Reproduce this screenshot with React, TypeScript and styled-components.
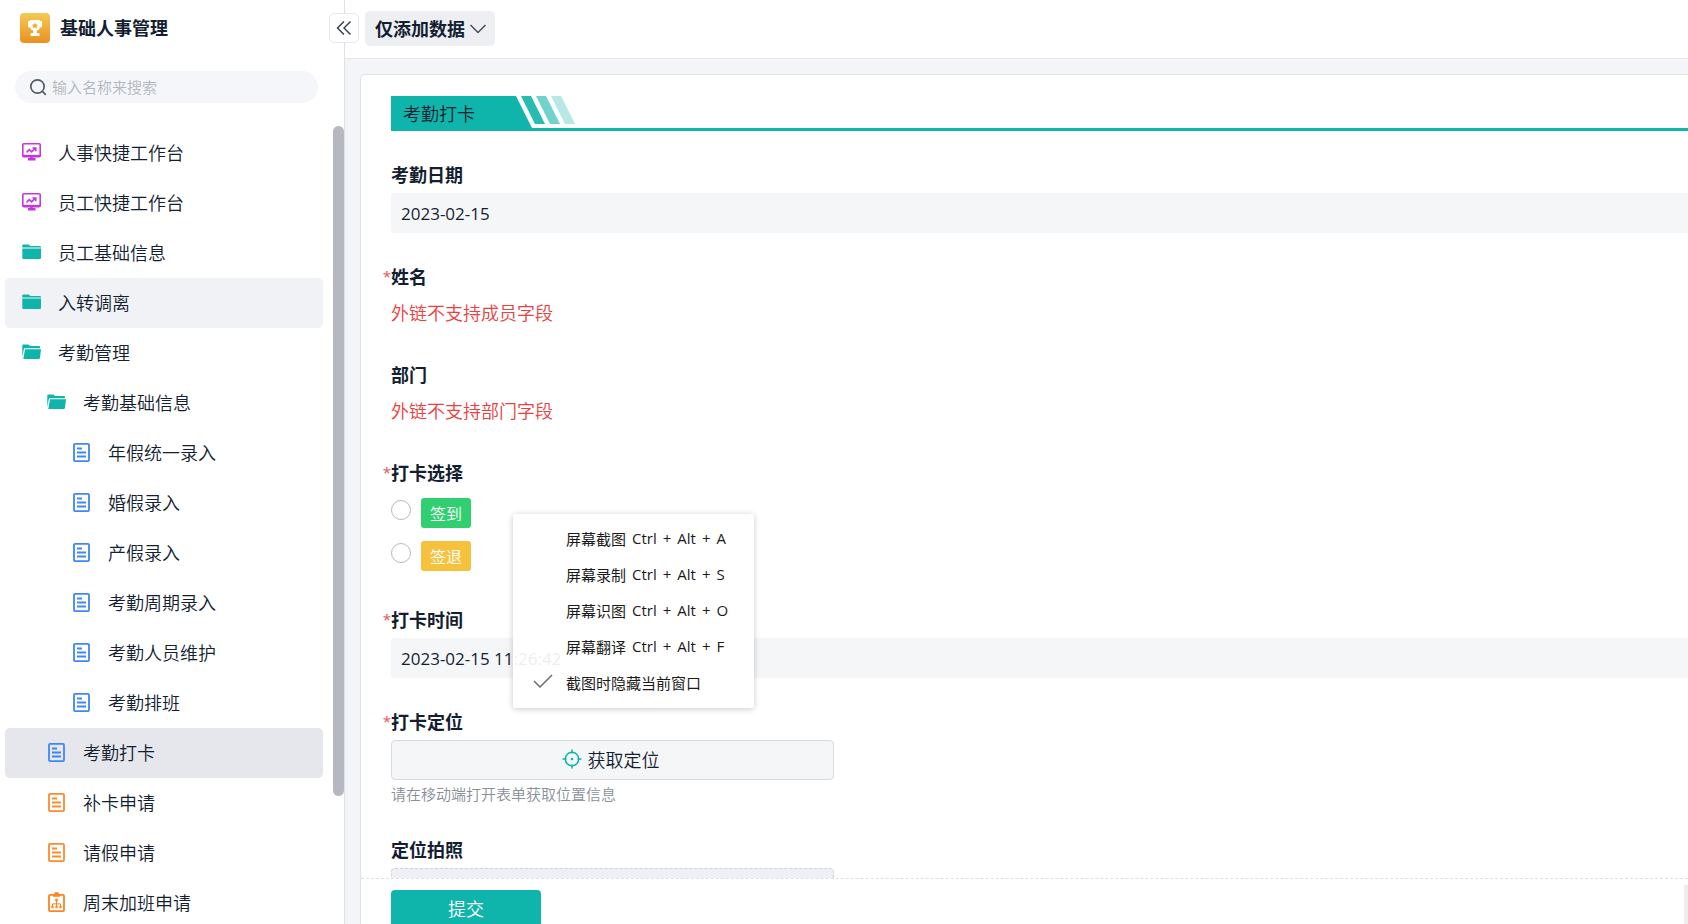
import React from "react";
import styled, { createGlobalStyle } from "styled-components";

const GlobalStyle = createGlobalStyle`
  *, *::before, *::after { box-sizing: border-box; }
  html, body, #root { height: 100%; }
  body {
    margin: 0;
    overflow: hidden;
    background: #fff;
    color: #141e31;
    font-family: "Open Sans", "Noto Sans CJK SC", sans-serif;
    font-size: 17px;
    font-weight: 350;
  }
  button, input { font: inherit; color: inherit; }
`;

const TEAL = "#0fb4aa";

const Page = styled.div`
  display: flex;
  height: 100vh;
  overflow: hidden;
`;

const Sidebar = styled.aside`
  display: flex;
  flex-direction: column;
  flex: 0 0 345px;
  border-right: 1px solid #dfe1e5;
  background: #fff;
`;

const Brand = styled.div`
  display: flex;
  align-items: center;
  justify-content: space-between;
  height: 56px;
  flex: none;
  padding-left: 20px;
`;

const BrandTitle = styled.h1`
  display: flex;
  align-items: center;
  gap: 10px;
  margin: 0;
  font-size: 18px;
  line-height: 24px;
  font-weight: 700;
`;

const CollapseButton = styled.button`
  position: relative;
  z-index: 2;
  display: grid;
  place-items: center;
  width: 30px;
  height: 30px;
  margin-right: -15px;
  padding: 0;
  border: 1px solid #e6e8ed;
  border-radius: 5px;
  background: #fff;
`;

const SearchBox = styled.label`
  display: flex;
  align-items: center;
  gap: 5px;
  height: 32px;
  flex: none;
  margin: 15px 26px 23px 15px;
  padding: 0 14px;
  border-radius: 16px;
  background: #f4f6f9;
`;

const SearchInput = styled.input`
  flex: 1;
  min-width: 0;
  padding: 0;
  border: 0;
  outline: 0;
  background: transparent;
  font-size: 15px;
  &::placeholder { color: #b3b6bf; opacity: 1; }
`;

const ListArea = styled.div`
  display: flex;
  flex: 1;
  min-height: 0;
  overflow: hidden;
`;

const NavList = styled.ul`
  flex: 1;
  min-width: 0;
  margin: 0;
  padding: 2px 10px 0 5px;
  list-style: none;
`;

type Tone = "none" | "hover" | "active";
const tones: Record<Tone, string> = { none: "transparent", hover: "#f1f2f6", active: "#e6e7ed" };

const NavLink = styled.a<{ $level: number; $tone: Tone }>`
  display: flex;
  align-items: center;
  gap: 14px;
  height: 50px;
  padding-left: ${(p) => 15 + p.$level * 25}px;
  border-radius: 5px;
  background: ${(p) => tones[p.$tone]};
  color: inherit;
  font-size: 18px;
  line-height: 24px;
  text-decoration: none;
`;

const ScrollThumb = styled.div`
  flex: none;
  width: 11px;
  height: 84%;
  border-radius: 6px;
  background: #b5b8c1;
`;

const Main = styled.main`
  display: flex;
  flex-direction: column;
  flex: 1;
  min-width: 0;
  background: #f4f5f8;
`;

const TopBar = styled.header`
  display: flex;
  align-items: center;
  flex: none;
  height: 59px;
  padding: 0 20px 2px;
  border-bottom: 1px solid #e6e8ec;
  background: #fff;
`;

const ModeButton = styled.button`
  display: flex;
  align-items: center;
  gap: 4px;
  height: 35px;
  padding: 1px 8px 0 10px;
  border: 0;
  border-radius: 5px;
  background: #edeff3;
  font-size: 18px;
  line-height: 24px;
  font-weight: 700;
`;

const Card = styled.form`
  display: flex;
  flex-direction: column;
  flex: 1;
  min-height: 0;
  margin: 15px 0 0 15px;
  border: 1px solid #e0e2e6;
  border-width: 1px 0 0 1px;
  border-radius: 5px 0 0 0;
  background: #fff;
`;

const CardBody = styled.div`
  flex: 1;
  min-height: 0;
  overflow: hidden;
  padding: 21px 0 0 30px;
`;

const SectionHead = styled.div`
  display: flex;
  height: 35px;
  margin-bottom: 32px;
  border-bottom: 3px solid ${TEAL};
`;

const SectionTitle = styled.h2`
  display: flex;
  align-items: center;
  width: 141px;
  height: 35px;
  margin: 0;
  padding: 1px 0 0 12px;
  background: ${TEAL};
  clip-path: polygon(0 0, 125px 0, 141px 32px, 141px 100%, 0 100%);
  font-size: 18px;
  line-height: 24px;
  font-weight: 350;
`;

const Stripes = styled.svg`
  margin-left: -11px;
`;

const Fields = styled.div`
  display: flex;
  flex-direction: column;
  gap: 32px;
`;

const Field = styled.div`
  display: flex;
  flex-direction: column;
  gap: 6px;
`;

const FieldLabel = styled.label<{ $required?: boolean }>`
  position: relative;
  font-size: 18px;
  line-height: 24px;
  font-weight: 700;
  ${(p) =>
    p.$required &&
    `&::before {
      content: "*";
      position: absolute;
      right: 100%;
      top: -1px;
      color: #eb5050;
      font-size: 15px;
      font-weight: 400;
    }`}
`;

const TextInput = styled.input`
  width: 100%;
  height: 40px;
  padding: 0 10px;
  border: 0;
  border-radius: 3px 0 0 3px;
  outline: 0;
  background: #f4f6f8;
  font-weight: 400;
`;

const Warning = styled.p`
  margin: 0;
  color: #eb4040;
  font-size: 18px;
  line-height: 36px;
`;

const RadioGroup = styled.div`
  display: flex;
  flex-direction: column;
  gap: 13px;
  padding: 7px 0 5px;
`;

const RadioRow = styled.label`
  display: flex;
  align-items: flex-start;
  gap: 10px;
  height: 30px;
`;

const Radio = styled.input`
  appearance: none;
  width: 20px;
  height: 20px;
  margin: 2px 0 0;
  border: 1px solid #b8bac2;
  border-radius: 50%;
  background: #fff;
`;

const Tag = styled.span<{ $color: string }>`
  padding: 2px 9px 0;
  border-radius: 3px;
  background: ${(p) => p.$color};
  color: #fff;
  font-size: 16px;
  line-height: 28px;
`;

const LocateButton = styled.button`
  display: flex;
  align-items: center;
  justify-content: center;
  gap: 6px;
  width: 443px;
  height: 40px;
  padding: 0 4px 2px 0;
  border: 1px solid #d7dadf;
  border-radius: 4px;
  background: #f4f6f8;
  font-size: 18px;
`;

const Hint = styled.p`
  margin: -3px 0 1px;
  color: #8a8f99;
  font-size: 15px;
  line-height: 22px;
`;

const PhotoBox = styled.button`
  width: 443px;
  height: 120px;
  border: 1px dashed #cfd2d8;
  border-radius: 4px;
  background: #eff0f5;
`;

const CardFooter = styled.div`
  display: flex;
  flex: none;
  align-items: flex-start;
  justify-content: space-between;
  height: 46px;
  overflow: hidden;
  border-top: 1px dashed #dfe0e3;
  padding: 6px 0 0 30px;
`;

const SubmitButton = styled.button`
  width: 150px;
  height: 40px;
  margin-top: 5px;
  padding: 0 0 4px;
  border: 0;
  border-radius: 4px;
  background: ${TEAL};
  color: #fff;
  font-size: 18px;
`;

const EdgeHandle = styled.div`
  width: 4px;
  height: 40px;
  background: #ededee;
`;

const ContextMenu = styled.ul`
  position: absolute;
  z-index: 5;
  left: 513px;
  top: 514px;
  width: 241px;
  margin: 0;
  padding: 6px 0 8px;
  border-radius: 3px;
  background: rgba(255, 255, 255, 0.92);
  box-shadow: 0 1px 6px rgba(0, 0, 0, 0.22);
  list-style: none;
`;

const MenuItem = styled.button`
  display: grid;
  grid-template-columns: 33px 1fr;
  align-items: center;
  width: 100%;
  height: 36px;
  padding: 0 0 0 20px;
  border: 0;
  background: transparent;
  color: #1b1b1b;
  font-size: 15px;
  font-weight: 400;
  text-align: left;
  white-space: nowrap;
`;

const MenuCaption = styled.span`
  display: flex;
  gap: 6px;
`;

const Logo = () => (
  <svg width="30" height="30" viewBox="0 0 30 30">
    <defs>
      <linearGradient id="gold" x1="0" y1="0" x2="0" y2="1">
        <stop offset="0" stopColor="#f4cb52" />
        <stop offset="1" stopColor="#ea9020" />
      </linearGradient>
    </defs>
    <rect width="30" height="30" rx="4" fill="url(#gold)" />
    <path
      fill="#fff"
      d="M10 7h10v1h1q1 0 1 1v4q0 1.500-1.500 1.500H20q-.8 2.500-3.200 3V20h1.700q1 0 1 1v2h-9v-2q0-1 1-1h1.700v-2.500q-2.400-.5-3.200-3h-.5Q8 14.500 8 13V9q0-1 1-1h1z"
    />
    <path fill="#efab36" d="m15 9.500 1 2 2.200.3-1.600 1.500.4 2.200-2-1-2 1 .4-2.200-1.600-1.500 2.200-.3z" />
  </svg>
);

const MonitorIcon = () => (
  <svg width="24" height="24" viewBox="0 0 24 24" fill="none" stroke="#c238dc" strokeWidth="1.600">
    <rect x="2.800" y="2.800" width="17.400" height="12.800" rx="1" />
    <path d="M2.500 14.800h18" strokeWidth="2" />
    <path d="M11.500 15.500v2.500M8 18.200h7.500" strokeWidth="2.400" />
    <path d="m6.500 11.300 2.800-2.600 2.300 2.200 4-4M12.500 7h3.300v3.200" />
  </svg>
);

const FolderIcon = () => (
  <svg width="24" height="24" viewBox="0 0 24 24" fill={TEAL}>
    <path d="M2.300 6.500V4.500q0-1 1-1h5.300l1.800 1.500H20q1 0 1 1v.5z" />
    <path d="M2.300 7.500H21v9.500q0 1-1 1H3.300q-1 0-1-1z" />
  </svg>
);

const FolderOpenIcon = () => (
  <svg width="24" height="24" viewBox="0 0 24 24" fill={TEAL}>
    <path d="M2.300 16V4.500q0-1 1-1h5l1.800 1.500H19q1 0 1 1v1.300H5q-1 0-1.200 1z" />
    <path d="M5 8.300h16l-1 8.500q-.2 1.200-1.300 1.200H3.300z" />
  </svg>
);

const FormIcon = ({ color }: { color: string }) => (
  <svg width="24" height="24" viewBox="0 0 24 24" fill="none" stroke={color} strokeWidth="1.800">
    <rect x="4" y="2.900" width="15" height="17.200" rx="1" />
    <path d="M7 7.500h5M7 11.500h9M7 15.500h9" />
  </svg>
);

const FlowIcon = () => (
  <svg width="24" height="24" viewBox="0 0 24 24" fill="none" stroke="#fb8520" strokeWidth="1.800">
    <rect x="4" y="3.900" width="15" height="16.200" rx="1" />
    <path d="M8 4.500h7.200M9.500 2.500h4.200" strokeWidth="2.400" />
    <path d="M11.500 8v4.500M7.500 15.500v-2.600h8v2.600M11.500 12.500v3" strokeWidth="1" />
    <path d="M10.200 9h2.600M6.400 16h2.200M10.400 16h2.200M14.400 16h2.200" strokeWidth="2.400" />
  </svg>
);

const SearchIcon = () => (
  <svg width="18" height="18" viewBox="0 0 18 18" fill="none" stroke="#535b69" strokeWidth="1.700">
    <circle cx="8.500" cy="8.500" r="6.700" />
    <path d="m13.200 13.200 3.600 3.600" />
  </svg>
);

const CollapseIcon = () => (
  <svg width="16" height="16" viewBox="0 0 16 16" fill="none" stroke="#303949" strokeWidth="1.400">
    <path d="M8 1.500 1.500 8 8 14.500M14.500 1.500 8 8l6.500 6.500" />
  </svg>
);

const ChevronIcon = () => (
  <svg width="18" height="12" viewBox="0 0 18 12" fill="none" stroke="#454d5b" strokeWidth="1.500">
    <path d="m1.500 2 7.500 7.500L16.500 2" />
  </svg>
);

const TargetIcon = () => (
  <svg width="20" height="20" viewBox="0 0 20 20" fill="none" stroke={TEAL} strokeWidth="1.500">
    <circle cx="10" cy="10" r="6.700" />
    <path d="M10 .5v4M10 15.500v4M.5 10h4M15.500 10h4" />
    <circle cx="10" cy="10" r="1.300" fill={TEAL} stroke="none" />
  </svg>
);

const CheckIcon = () => (
  <svg width="20" height="14" viewBox="0 0 20 14" fill="none" stroke="#6d6d6d" strokeWidth="1.500">
    <path d="m1 7 6 6L19 1" />
  </svg>
);

const BLUE = "#3f86f7";
const ORANGE = "#fb8b2c";

const navItems: { text: string; level: number; icon: React.ReactNode; tone?: Tone }[] = [
  { text: "人事快捷工作台", level: 0, icon: <MonitorIcon /> },
  { text: "员工快捷工作台", level: 0, icon: <MonitorIcon /> },
  { text: "员工基础信息", level: 0, icon: <FolderIcon /> },
  { text: "入转调离", level: 0, icon: <FolderIcon />, tone: "hover" },
  { text: "考勤管理", level: 0, icon: <FolderOpenIcon /> },
  { text: "考勤基础信息", level: 1, icon: <FolderOpenIcon /> },
  { text: "年假统一录入", level: 2, icon: <FormIcon color={BLUE} /> },
  { text: "婚假录入", level: 2, icon: <FormIcon color={BLUE} /> },
  { text: "产假录入", level: 2, icon: <FormIcon color={BLUE} /> },
  { text: "考勤周期录入", level: 2, icon: <FormIcon color={BLUE} /> },
  { text: "考勤人员维护", level: 2, icon: <FormIcon color={BLUE} /> },
  { text: "考勤排班", level: 2, icon: <FormIcon color={BLUE} /> },
  { text: "考勤打卡", level: 1, icon: <FormIcon color={BLUE} />, tone: "active" },
  { text: "补卡申请", level: 1, icon: <FormIcon color={ORANGE} /> },
  { text: "请假申请", level: 1, icon: <FormIcon color={ORANGE} /> },
  { text: "周末加班申请", level: 1, icon: <FlowIcon /> },
];

const menuItems = [
  { text: "屏幕截图 Ctrl + Alt + A" },
  { text: "屏幕录制 Ctrl + Alt + S" },
  { text: "屏幕识图 Ctrl + Alt + O" },
  { text: "屏幕翻译 Ctrl + Alt + F" },
  { text: "截图时隐藏当前窗口", checked: true },
];

export default function App() {
  return (
    <Page>
      <GlobalStyle />
      <Sidebar>
        <Brand>
          <BrandTitle>
            <Logo />
            基础人事管理
          </BrandTitle>
          <CollapseButton type="button" aria-label="收起">
            <CollapseIcon />
          </CollapseButton>
        </Brand>
        <SearchBox>
          <SearchIcon />
          <SearchInput type="text" placeholder="输入名称来搜索" aria-label="输入名称来搜索" />
        </SearchBox>
        <ListArea>
          <NavList>
            {navItems.map((item) => (
              <li key={item.text}>
                <NavLink href="#" $level={item.level} $tone={item.tone ?? "none"}>
                  {item.icon}
                  {item.text}
                </NavLink>
              </li>
            ))}
          </NavList>
          <ScrollThumb />
        </ListArea>
      </Sidebar>

      <Main>
        <TopBar>
          <ModeButton type="button">
            仅添加数据
            <ChevronIcon />
          </ModeButton>
        </TopBar>
        <Card onSubmit={(e) => e.preventDefault()}>
          <CardBody>
            <SectionHead>
              <SectionTitle>考勤打卡</SectionTitle>
              <Stripes width="56" height="28" viewBox="0 0 56 28" fill={TEAL}>
                <path d="M0 0h10l14 28H14z" opacity="0.9" />
                <path d="M15 0h10l14 28H29z" opacity="0.6" />
                <path d="M30 0h10l14 28H44z" opacity="0.3" />
              </Stripes>
            </SectionHead>
            <Fields>
              <Field>
                <FieldLabel htmlFor="date">考勤日期</FieldLabel>
                <TextInput id="date" readOnly value="2023-02-15" />
              </Field>
              <Field>
                <FieldLabel as="div" $required>姓名</FieldLabel>
                <Warning>外链不支持成员字段</Warning>
              </Field>
              <Field>
                <FieldLabel as="div">部门</FieldLabel>
                <Warning>外链不支持部门字段</Warning>
              </Field>
              <Field role="radiogroup" aria-labelledby="punch">
                <FieldLabel as="div" id="punch" $required>打卡选择</FieldLabel>
                <RadioGroup>
                  <RadioRow>
                    <Radio type="radio" name="punch" />
                    <Tag $color="#31cf70">签到</Tag>
                  </RadioRow>
                  <RadioRow>
                    <Radio type="radio" name="punch" />
                    <Tag $color="#f6c23e">签退</Tag>
                  </RadioRow>
                </RadioGroup>
              </Field>
              <Field>
                <FieldLabel htmlFor="time" $required>打卡时间</FieldLabel>
                <TextInput id="time" readOnly value="2023-02-15 11:26:42" />
              </Field>
              <Field>
                <FieldLabel htmlFor="locate" $required>打卡定位</FieldLabel>
                <LocateButton id="locate" type="button">
                  <TargetIcon />
                  获取定位
                </LocateButton>
                <Hint>请在移动端打开表单获取位置信息</Hint>
              </Field>
              <Field>
                <FieldLabel htmlFor="photo">定位拍照</FieldLabel>
                <PhotoBox id="photo" type="button" />
              </Field>
            </Fields>
          </CardBody>
          <CardFooter>
            <SubmitButton type="submit">提交</SubmitButton>
            <EdgeHandle />
          </CardFooter>
        </Card>
      </Main>

      <ContextMenu role="menu">
        {menuItems.map((item) => (
          <li key={item.text} role="none">
            <MenuItem type="button" role="menuitemcheckbox" aria-checked={!!item.checked}>
              <span>{item.checked && <CheckIcon />}</span>
              <MenuCaption>
                {item.text.split(" ").map((part, i) => (
                  <span key={i}>{part}</span>
                ))}
              </MenuCaption>
            </MenuItem>
          </li>
        ))}
      </ContextMenu>
    </Page>
  );
}
